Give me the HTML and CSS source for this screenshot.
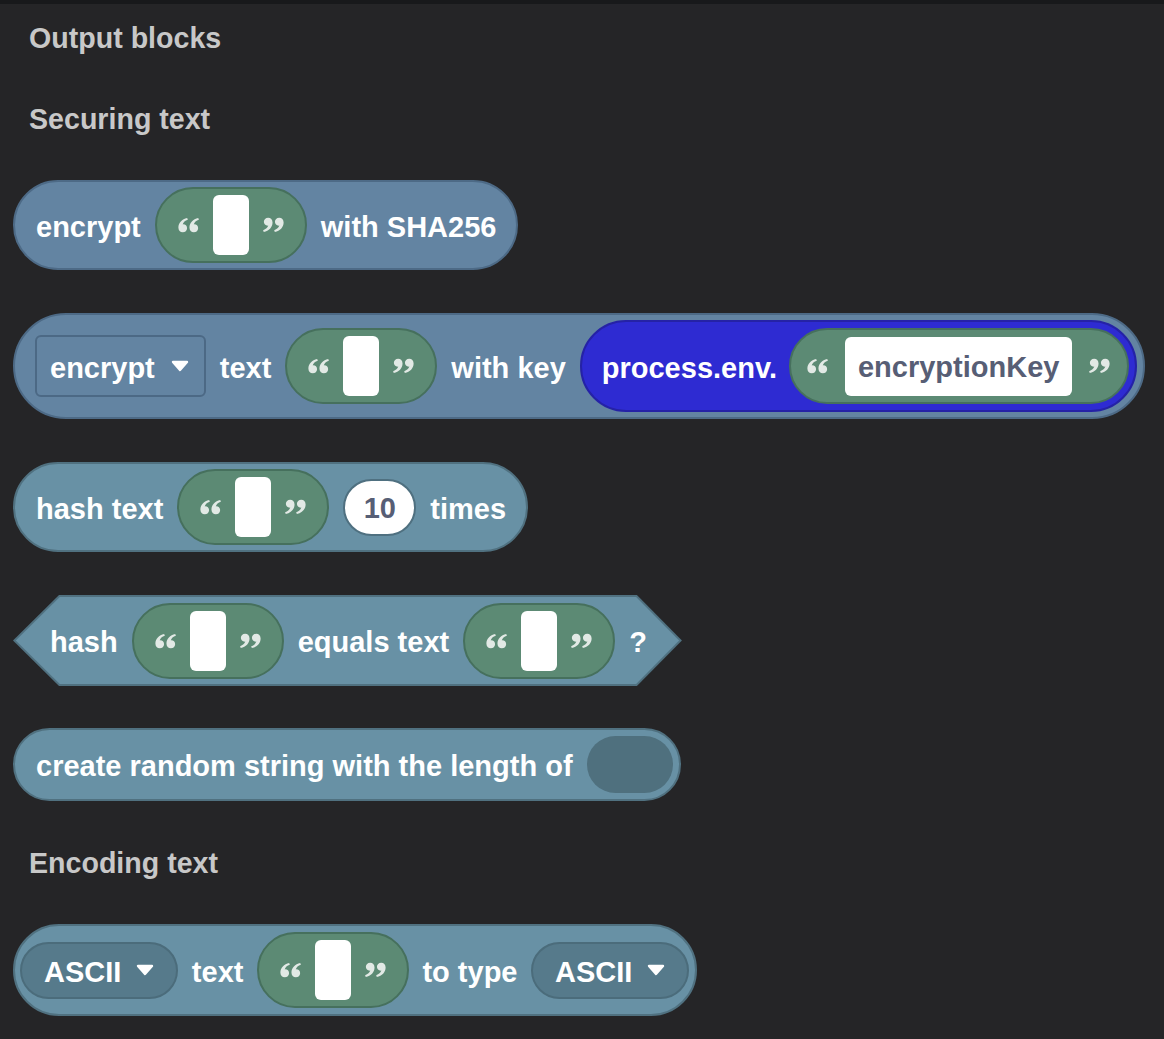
FILE: index.html
```html
<!DOCTYPE html>
<html>
<head>
<meta charset="utf-8">
<link rel="stylesheet" href="styles.css">
</head>
<body>
<svg width="0" height="0" class="defs">
  <defs>
    <symbol id="qopen" viewBox="0 0 22 16">
      <path d="M9.6 0.6C4.2 1.8 0.4 5.6 0.4 10.6c0 3 1.9 5 4.6 5 2.6 0 4.5-1.9 4.5-4.3 0-2.3-1.7-4-4-4-0.2 0-0.4 0-0.6 0.1 0.7-2.3 2.5-3.9 5.4-4.9z"/>
      <path d="M21.2 0.6C15.8 1.8 12 5.6 12 10.6c0 3 1.9 5 4.6 5 2.6 0 4.5-1.9 4.5-4.3 0-2.3-1.7-4-4-4-0.2 0-0.4 0-0.6 0.1 0.7-2.3 2.5-3.9 5.4-4.9z"/>
    </symbol>
    <symbol id="qclose" viewBox="0 0 22 16">
      <g transform="rotate(180 11 8)">
        <path d="M9.6 0.6C4.2 1.8 0.4 5.6 0.4 10.6c0 3 1.9 5 4.6 5 2.6 0 4.5-1.9 4.5-4.3 0-2.3-1.7-4-4-4-0.2 0-0.4 0-0.6 0.1 0.7-2.3 2.5-3.9 5.4-4.9z"/>
        <path d="M21.2 0.6C15.8 1.8 12 5.6 12 10.6c0 3 1.9 5 4.6 5 2.6 0 4.5-1.9 4.5-4.3 0-2.3-1.7-4-4-4-0.2 0-0.4 0-0.6 0.1 0.7-2.3 2.5-3.9 5.4-4.9z"/>
      </g>
    </symbol>
    <symbol id="arrow" viewBox="0 0 18 12">
      <path d="M2 2H16L9 10Z" fill="#fff" stroke="#fff" stroke-width="2.4" stroke-linejoin="round"/>
    </symbol>
  </defs>
</svg>
<div class="topbar"></div>
<main class="flyout">
  <h2 class="heading first">Output blocks</h2>
  <h2 class="heading second">Securing text</h2>

  <div class="block steel b1">
    <span class="lbl">encrypt</span>
    <span class="str"><svg class="q"><use href="#qopen"/></svg><span class="box"></span><svg class="q"><use href="#qclose"/></svg></span>
    <span class="lbl">with SHA256</span>
  </div>

  <div class="block steel b2 end-input">
    <span class="dd-rect"><span class="lbl">encrypt</span><svg class="arr"><use href="#arrow"/></svg></span>
    <span class="lbl">text</span>
    <span class="str"><svg class="q"><use href="#qopen"/></svg><span class="box"></span><svg class="q"><use href="#qclose"/></svg></span>
    <span class="lbl">with key</span>
    <span class="blue">
      <span class="lbl">process.env.</span>
      <span class="str key"><svg class="q"><use href="#qopen"/></svg><span class="box txt">encryptionKey</span><svg class="q"><use href="#qclose"/></svg></span>
    </span>
  </div>

  <div class="block teal b3">
    <span class="lbl">hash text</span>
    <span class="str"><svg class="q"><use href="#qopen"/></svg><span class="box"></span><svg class="q"><use href="#qclose"/></svg></span>
    <span class="num">10</span>
    <span class="lbl">times</span>
  </div>

  <div class="hex b4">
    <span class="lbl">hash</span>
    <span class="str"><svg class="q"><use href="#qopen"/></svg><span class="box"></span><svg class="q"><use href="#qclose"/></svg></span>
    <span class="lbl">equals text</span>
    <span class="str"><svg class="q"><use href="#qopen"/></svg><span class="box"></span><svg class="q"><use href="#qclose"/></svg></span>
    <span class="lbl">?</span>
  </div>

  <div class="block teal b5 end-input">
    <span class="lbl">create random string with the length of</span>
    <span class="slot"></span>
  </div>

  <h2 class="heading third">Encoding text</h2>

  <div class="block teal b6 start-input end-input">
    <span class="dd-pill"><span class="lbl">ASCII</span><svg class="arr"><use href="#arrow"/></svg></span>
    <span class="lbl">text</span>
    <span class="str"><svg class="q"><use href="#qopen"/></svg><span class="box"></span><svg class="q"><use href="#qclose"/></svg></span>
    <span class="lbl">to type</span>
    <span class="dd-pill"><span class="lbl">ASCII</span><svg class="arr"><use href="#arrow"/></svg></span>
  </div>
</main>
</body>
</html>
```

FILE: styles.css
```css
html, body {
  margin: 0;
  padding: 0;
  background: #252527;
}

body {
  font-family: "Liberation Sans", Arial, sans-serif;
  min-height: 1039px;
}

.defs {
  position: absolute;
  width: 0;
  height: 0;
}

.topbar {
  height: 4px;
  background: #18191b;
}

.flyout {
  display: flex;
  flex-direction: column;
  align-items: flex-start;
  padding-left: 13px;
}

.heading {
  margin: 0;
  margin-left: 16px;
  font-size: 28.6px;
  line-height: 32px;
  font-weight: bold;
  color: #c8c8c8;
}

.heading.first { margin-top: 18px; }
.heading.second { margin-top: 49px; }
.heading.third { margin-top: 46px; }

.lbl {
  color: #fff;
  font-weight: bold;
  font-size: 29px;
  line-height: 34px;
  padding-top: 3px;
  white-space: nowrap;
}

.block {
  display: flex;
  align-items: center;
  gap: 14px;
  box-sizing: border-box;
  border: 2px solid;
  border-radius: 999px;
  padding: 5px 21px;
  min-height: 90px;
}

.block.steel {
  background: #6384a2;
  border-color: #4d6a86;
}

.block.teal {
  background: #6891a5;
  border-color: #507180;
}

.block.end-input { padding-right: 6px; }
.block.start-input { padding-left: 5px; }

.b1 { margin-top: 45px; padding-right: 20px; }
.b2 { margin-top: 43px; padding-left: 20px; }
.b3 { margin-top: 43px; padding-right: 20px; }
.b4 { margin-top: 43px; }
.b5 { margin-top: 42px; min-height: 73px; padding-right: 6px; }
.b6 { margin-top: 45px; min-height: 92px; padding-right: 3px; gap: 13.5px; }

.str {
  display: flex;
  align-items: center;
  gap: 14px;
  box-sizing: border-box;
  height: 76px;
  padding: 0 21px;
  background: #5c8a74;
  border: 2px solid #46705d;
  border-radius: 38px;
}

.str.key {
  padding: 0 17px 0 16px;
  gap: 17px;
}

.q {
  width: 21px;
  height: 16px;
  fill: #e2e9e5;
  flex: none;
}

.box {
  display: block;
  width: 36px;
  height: 60px;
  background: #fff;
  border-radius: 6px;
}

.box.txt {
  width: auto;
  height: 59px;
  display: flex;
  align-items: center;
  box-sizing: border-box;
  padding: 3px 13px 0;
  color: #575e75;
  font-weight: bold;
  font-size: 29px;
  white-space: nowrap;
}

.blue {
  display: flex;
  align-items: center;
  gap: 12px;
  box-sizing: border-box;
  height: 92px;
  padding: 0 6px 0 20px;
  background: #2e2bd2;
  border: 2px solid #2522a6;
  border-radius: 46px;
}

.dd-rect {
  display: flex;
  align-items: center;
  gap: 16px;
  box-sizing: border-box;
  height: 62px;
  padding: 0 15px 0 13px;
  border: 2px solid #4c6985;
  border-radius: 6px;
}

.dd-pill {
  display: flex;
  align-items: center;
  gap: 15px;
  box-sizing: border-box;
  height: 57px;
  padding: 0 22px 0 22px;
  background: #567a8b;
  border: 2px solid #4b6c7b;
  border-radius: 29px;
}

.arr {
  width: 18px;
  height: 12px;
  flex: none;
}

.num {
  display: flex;
  align-items: center;
  justify-content: center;
  box-sizing: border-box;
  width: 73px;
  height: 57px;
  padding-top: 3px;
  background: #fff;
  border: 2px solid #4f7080;
  border-radius: 29px;
  color: #575e75;
  font-weight: bold;
  font-size: 29px;
}

.slot {
  display: block;
  width: 86px;
  height: 57px;
  background: #4f707e;
  border-radius: 29px;
}

.hex {
  position: relative;
  display: flex;
  align-items: center;
  gap: 14px;
  box-sizing: border-box;
  height: 91px;
  padding: 0 35px 0 37px;
  isolation: isolate;
}

.hex::before,
.hex::after {
  content: "";
  position: absolute;
  z-index: -1;
}

.hex::before {
  inset: 0;
  background: #507180;
  clip-path: polygon(46px 0, calc(100% - 45px) 0, 100% 50%, calc(100% - 45px) 100%, 46px 100%, 0 50%);
}

.hex::after {
  inset: 2px;
  background: #6891a5;
  clip-path: polygon(44.8px 0, calc(100% - 43.8px) 0, calc(100% - 0.8px) 50%, calc(100% - 43.8px) 100%, 44.8px 100%, 0.8px 50%);
}
```
